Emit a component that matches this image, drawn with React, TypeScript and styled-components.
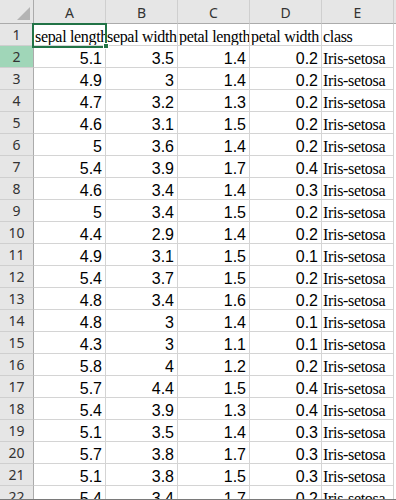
import React from "react";
import styled, { createGlobalStyle } from "styled-components";

const GlobalStyle = createGlobalStyle`
  html, body {
    margin: 0;
    padding: 0;
    background: #ffffff;
    overflow: hidden;
  }
`;

const columns = ["A", "B", "C", "D", "E"];
const header = ["sepal length", "sepal width", "petal length", "petal width", "class"];

const rows: number[][] = [
  [5.1, 3.5, 1.4, 0.2],
  [4.9, 3, 1.4, 0.2],
  [4.7, 3.2, 1.3, 0.2],
  [4.6, 3.1, 1.5, 0.2],
  [5, 3.6, 1.4, 0.2],
  [5.4, 3.9, 1.7, 0.4],
  [4.6, 3.4, 1.4, 0.3],
  [5, 3.4, 1.5, 0.2],
  [4.4, 2.9, 1.4, 0.2],
  [4.9, 3.1, 1.5, 0.1],
  [5.4, 3.7, 1.5, 0.2],
  [4.8, 3.4, 1.6, 0.2],
  [4.8, 3, 1.4, 0.1],
  [4.3, 3, 1.1, 0.1],
  [5.8, 4, 1.2, 0.2],
  [5.7, 4.4, 1.5, 0.4],
  [5.4, 3.9, 1.3, 0.4],
  [5.1, 3.5, 1.4, 0.3],
  [5.7, 3.8, 1.7, 0.3],
  [5.1, 3.8, 1.5, 0.3],
  [5.4, 3.4, 1.7, 0.2],
];

const Window = styled.div`
  height: 500px;
  box-sizing: border-box;
  border-bottom: 1px solid #7a7a7a;
  overflow: hidden;
`;

const Sheet = styled.div`
  display: grid;
  grid-template-columns: 34px repeat(5, 72px) 1fr;
  grid-template-rows: 24px;
  grid-auto-rows: 22px;
`;

const Corner = styled.div`
  position: relative;
  background: #e6e6e6;
  box-sizing: border-box;
  border-right: 1px solid #ababab;
  border-bottom: 1px solid #ababab;

  &::after {
    content: "";
    position: absolute;
    right: 3px;
    bottom: 3px;
    width: 13px;
    height: 13px;
    background: #b4b4b4;
    clip-path: polygon(100% 0, 100% 100%, 0 100%);
  }
`;

const ColHeader = styled.div<{ $last?: boolean }>`
  background: #e6e6e6;
  box-sizing: border-box;
  border-right: ${(p) => (p.$last ? "none" : "1px solid #cfcfcf")};
  border-bottom: 1px solid #ababab;
  display: flex;
  align-items: center;
  justify-content: center;
  padding-top: 1px;
  font-family: "Noto Sans", "Liberation Sans", sans-serif;
  font-size: 14px;
  color: #333333;
`;

const RowHeader = styled.div<{ $active?: boolean }>`
  background: ${(p) => (p.$active ? "#a0d6b8" : "#e6e6e6")};
  box-sizing: border-box;
  border-right: 1px solid #ababab;
  border-bottom: 1px solid #cfcfcf;
  display: flex;
  align-items: flex-end;
  justify-content: center;
  padding-bottom: 2px;
  font-family: "Noto Sans", "Liberation Sans", sans-serif;
  font-size: 14px;
  line-height: 16px;
  color: #333333;
`;

const Cell = styled.div<{ $num?: boolean }>`
  position: relative;
  box-sizing: border-box;
  border-right: 1px solid #d4d4d4;
  border-bottom: 1px solid #d4d4d4;
  display: flex;
  align-items: flex-end;
  justify-content: ${(p) => (p.$num ? "flex-end" : "flex-start")};
  padding: ${(p) => (p.$num ? "0 3px 0 2px" : "0 0 0 1px")};
  white-space: nowrap;
  overflow: hidden;
  font-family: ${(p) =>
    p.$num ? '"Liberation Sans", Arial, sans-serif' : '"Liberation Serif", "Times New Roman", serif'};
  letter-spacing: ${(p) => (p.$num ? "0" : "-0.32px")};
  font-size: 16px;
  line-height: 16px;
  color: #000000;
`;

const ActiveCell = styled(Cell)`
  overflow: visible;
  z-index: 2;
`;

const Clip = styled.span`
  display: block;
  overflow: hidden;
  width: 100%;
`;

const Selection = styled.div`
  position: absolute;
  left: -2px;
  top: -1px;
  width: 75px;
  height: 25px;
  box-sizing: border-box;
  border: 2px solid #217346;
  pointer-events: none;
`;

const FillHandle = styled.div`
  position: absolute;
  left: 69px;
  top: 19px;
  width: 6px;
  height: 6px;
  box-sizing: border-box;
  background: #217346;
  border: 1px solid #ffffff;
`;

const Filler = styled.div`
  background: #ffffff;
`;

export default function App() {
  return (
    <>
      <GlobalStyle />
      <Window>
        <Sheet>
          <Corner />
          {columns.map((c) => (
            <ColHeader key={c}>{c}</ColHeader>
          ))}
          <ColHeader $last />

          <RowHeader>1</RowHeader>
          {header.map((h, i) =>
            i === 0 ? (
              <ActiveCell key={h}>
                <Clip>{h}</Clip>
                <Selection />
                <FillHandle />
              </ActiveCell>
            ) : (
              <Cell key={h}>{h}</Cell>
            )
          )}
          <Filler />

          {rows.map((r, i) => (
            <React.Fragment key={i}>
              <RowHeader $active={i === 0}>{i + 2}</RowHeader>
              {r.map((v, j) => (
                <Cell key={j} $num>
                  {v}
                </Cell>
              ))}
              <Cell>Iris-setosa</Cell>
              <Filler />
            </React.Fragment>
          ))}
        </Sheet>
      </Window>
    </>
  );
}
